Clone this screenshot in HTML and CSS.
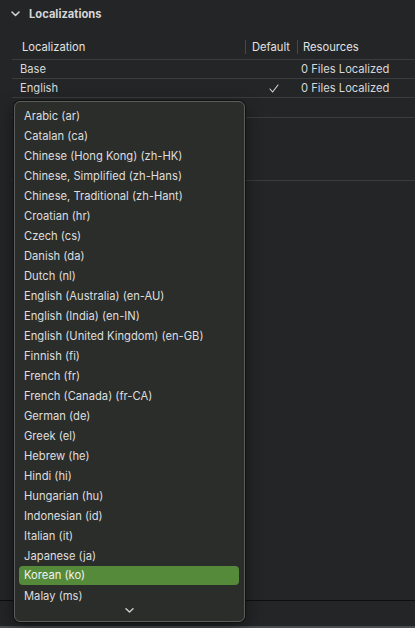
FILE: index.html
```html
<!DOCTYPE html>
<html>
<head>
<meta charset="utf-8">
<link rel="stylesheet" href="styles.css">
</head>
<body>
<div class="page">
  <div class="section-head">
    <svg class="disclosure" width="9" height="6" viewBox="0 0 9 6"><path d="M1 1 L4.5 4.5 L8 1" fill="none" stroke="#cfcfcf" stroke-width="1.6" stroke-linecap="round" stroke-linejoin="round"/></svg>
    <span class="section-title">Localizations</span>
  </div>
  <div class="table">
    <div class="thead">
      <div class="th c-loc">Localization</div>
      <div class="th c-def">Default</div>
      <div class="th c-res">Resources</div>
    </div>
    <div class="tr">
      <div class="td c-loc">Base</div>
      <div class="td c-def"></div>
      <div class="td c-res">0 Files Localized</div>
    </div>
    <div class="tr">
      <div class="td c-loc">English</div>
      <div class="td c-def"><svg width="10" height="9" viewBox="0 0 10 9"><path d="M1 5 L3.6 8 L9 1" fill="none" stroke="#d8d8d8" stroke-width="1.1" stroke-linecap="round" stroke-linejoin="round"/></svg></div>
      <div class="td c-res">0 Files Localized</div>
    </div>
    <div class="tr empty"></div>
    <div class="gap-block"></div>
  </div>
  <div class="spacer"></div>
  <div class="bottom-bar"></div>
  <div class="bottom-edge"></div>

  <div class="menu">
    <div class="item">Arabic (ar)</div>
    <div class="item">Catalan (ca)</div>
    <div class="item">Chinese (Hong Kong) (zh-HK)</div>
    <div class="item">Chinese, Simplified (zh-Hans)</div>
    <div class="item">Chinese, Traditional (zh-Hant)</div>
    <div class="item">Croatian (hr)</div>
    <div class="item">Czech (cs)</div>
    <div class="item">Danish (da)</div>
    <div class="item">Dutch (nl)</div>
    <div class="item">English (Australia) (en-AU)</div>
    <div class="item">English (India) (en-IN)</div>
    <div class="item">English (United Kingdom) (en-GB)</div>
    <div class="item">Finnish (fi)</div>
    <div class="item">French (fr)</div>
    <div class="item">French (Canada) (fr-CA)</div>
    <div class="item">German (de)</div>
    <div class="item">Greek (el)</div>
    <div class="item">Hebrew (he)</div>
    <div class="item">Hindi (hi)</div>
    <div class="item">Hungarian (hu)</div>
    <div class="item">Indonesian (id)</div>
    <div class="item">Italian (it)</div>
    <div class="item">Japanese (ja)</div>
    <div class="item selected">Korean (ko)</div>
    <div class="item">Malay (ms)</div>
    <div class="more">
      <svg width="9" height="5" viewBox="0 0 9 5"><path d="M1 0.8 L4.5 4 L8 0.8" fill="none" stroke="#d0d0d0" stroke-width="1.4" stroke-linecap="round" stroke-linejoin="round"/></svg>
    </div>
  </div>
</div>
</body>
</html>
```

FILE: styles.css
```css
* { box-sizing: border-box; }
html, body {
  margin: 0;
  padding: 0;
  background: #232527;
  width: 415px;
  height: 628px;
  overflow: hidden;
}
body {
  font-family: Inter, "Liberation Sans", sans-serif;
  font-size: 11.2px;
  color: #dcdcdc;
}
.page {
  position: relative;
  width: 415px;
  height: 628px;
  display: flex;
  flex-direction: column;
}
.section-head {
  height: 28px;
  display: flex;
  align-items: center;
  padding-left: 11px;
  padding-bottom: 1px;
}
.disclosure { margin-right: 9px; margin-top: 1px; }
.section-title {
  font-weight: 700;
  font-size: 11.2px;
  color: #d6d6d6;
}
.table {
  margin-left: 12px;
  margin-top: 10px;
}
.thead {
  display: flex;
  height: 22px;
  align-items: center;
  padding-bottom: 3px;
  border-bottom: 1px solid #3a3c3e;
}
.thead .th { color: #e2e2e2; }
.c-loc { width: 233px; padding-left: 10px; }
.c-def { width: 52px; padding-left: 6px; }
.c-res { flex: 1; padding-left: 5px; }
.thead .c-def, .thead .c-res {
  border-left: 1px solid #46484a;
  height: 14px;
  line-height: 14px;
}
.thead .c-loc { height: 14px; line-height: 14px; }
.tr {
  display: flex;
  align-items: center;
  height: 19px;
  border-bottom: 1px solid #3a3c3e;
}
.td { color: #d8d8d8; }
.tr .c-loc { padding-left: 8px; }
.tr .c-def { display: flex; justify-content: center; padding-left: 5px; }
.tr .c-res { padding-left: 4px; }
.tr.empty { height: 20px; }
.gap-block {
  height: 63px;
  border-bottom: 1px solid #3a3c3e;
}
.spacer { flex: 1; }
.bottom-bar {
  height: 26px;
  border-top: 1px solid #0e0e0e;
  background: #232527;
}
.bottom-edge {
  height: 2px;
  background: #4a4c4e;
}
.menu {
  position: absolute;
  left: 14px;
  top: 101px;
  width: 231px;
  height: 521px;
  background: #2b2d2b;
  border: 1px solid #5c5e5c;
  border-radius: 6px;
  box-shadow: 0 0 0 1px #111, 0 6px 18px rgba(0,0,0,0.45);
  padding: 4px 5px 0 4px;
  display: flex;
  flex-direction: column;
}
.item {
  height: 20px;
  line-height: 20px;
  padding-left: 5px;
  border-radius: 4px;
  color: #dedede;
  white-space: nowrap;
}
.item.selected {
  background: #558a3a;
  color: #f2f2f2;
  height: 19px;
  line-height: 19px;
  margin-bottom: 1px;
}
.more {
  display: flex;
  justify-content: center;
  padding-top: 2px;
}
```
